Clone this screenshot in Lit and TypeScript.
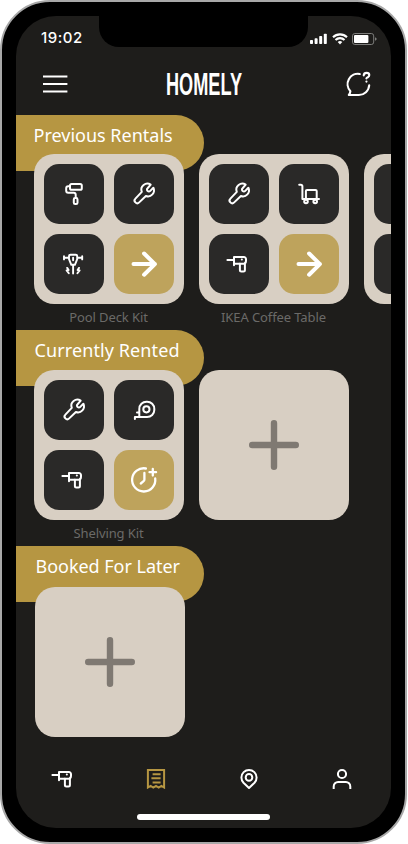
import { LitElement, html, svg, css } from "lit";
import { customElement, property } from "lit/decorators.js";

const icons: Record<string, { size: number; stroke: number; body: unknown }> = {
  roller: {
    size: 24,
    stroke: 2,
    body: svg`<rect x="8" y="1.9" width="11.8" height="5.9" rx="1.6"/><path d="M8 4.2H6.2a2 2 0 0 0-2 2v2.6a2 2 0 0 0 2 2h5.5a2 2 0 0 1 2 2v3"/><rect x="11.8" y="16" width="3.7" height="6.1" rx="1.4"/>`,
  },
  wrench: {
    size: 24,
    stroke: 2,
    body: svg`<path d="M18.7 2.7a6 6 0 0 0-8.9 7.2L3.4 16.6a2.6 2.6 0 0 0 3.8 3.8l6.7-6.4a6 6 0 0 0 7.5-8.2l-3.4 3.3a1.5 1.5 0 0 1-2.2 0l-.4-.4a1.5 1.5 0 0 1 0-2.2z"/>`,
  },
  jackhammer: {
    size: 24,
    stroke: 1.9,
    body: svg`<path d="M2 4.2v3.2M20.2 4.2v3.2M2 5.8h5M15.2 5.8h5M7 4.2q0-1.4 1.4-1.4h5.4q1.4 0 1.4 1.4v3l-2.3 5.6H9.3L7 7.2zM11.1 5.8v2.4M11.1 13v8.6M5.2 15.9l1.4 2.1-2 .4 2.2 2.9M17 15.9l-1.4 2.1 2 .4-2.2 2.9"/>`,
  },
  arrow: {
    size: 30,
    stroke: 4,
    body: svg`<path d="M4.5 15.1h21.4M15.1 4.5l10.8 10.6-10.8 10.6"/>`,
  },
  trolley: {
    size: 24,
    stroke: 2,
    body: svg`<path d="M2.2 2.8h1.6a1.6 1.6 0 0 1 1.6 1.6v12.6h16.6"/><rect x="8.9" y="7.9" width="10.8" height="9.1" rx="1.2"/><circle cx="9" cy="19.5" r="1.8"/><circle cx="18.2" cy="19.5" r="1.8"/>`,
  },
  drill: {
    size: 24,
    stroke: 2,
    body: svg`<path d="M.4 8.1h6M7 5v8.3M7 5h9.8a2.2 2.2 0 0 1 2.2 2.2v1.4q0 1.4-1.1 2.4v7a1.5 1.5 0 0 1-1.5 1.5h-2a1.5 1.5 0 0 1-1.5-1.5v-6.4M7 11.7h9.4q2.6 0 2.6-3M14.8 7.4h.1"/>`,
  },
  tape: {
    size: 24,
    stroke: 2,
    body: svg`<path d="M2.9 21v-1.9h12.2a7.2 7.2 0 0 0 7.2-7.2v-1a7.2 7.2 0 0 0-7.2-7.2h-.6a7.2 7.2 0 0 0-7.2 7.2v8.2M5 14.4h2.3"/><circle cx="14.4" cy="11.3" r="3.1"/>`,
  },
  clock: {
    size: 30,
    stroke: 2.3,
    body: svg`<path d="M16.9 3.5A11.6 11.6 0 1 0 26.2 13.4M15.4 8v6.6q0 1-.8 1.6l-2.8 2.3M23.8 3.9v6.6M20.5 7.2h6.6"/>`,
  },
  chat: {
    size: 26,
    stroke: 2.1,
    body: svg`<path d="M13.8 3A10.3 10.3 0 0 0 4.4 20.2Q4.2 22.4 2.8 24H12.7A10.4 10.4 0 0 0 23.2 14.2M17.7 4.4q.2-2.5 2.9-2.5 2.6 0 2.7 2.2 0 1.3-1.5 2.1-1.3.6-1.4 1.2M20.4 10.6h.1"/>`,
  },
  receipt: {
    size: 24,
    stroke: 2,
    body: svg`<path stroke-linejoin="miter" stroke-linecap="butt" d="M3.9 20.6V3h16.2v17.6l-2.7-1.6-2.7 1.6L12 19l-2.7 1.6L6.6 19zM8.6 7.2h8M7.4 11.3h9.2M8.6 15.4h8"/>`,
  },
  pin: {
    size: 24,
    stroke: 2,
    body: svg`<path d="M12 21l-5.5-5.2a7.6 7.6 0 1 1 11 0z"/><circle cx="12" cy="10.4" r="3.3"/>`,
  },
  user: {
    size: 24,
    stroke: 2,
    body: svg`<circle cx="12" cy="7" r="4.1"/><path stroke-linecap="butt" d="M3.7 22v-2.6a4.4 4.4 0 0 1 4.4-4.4h7.8a4.4 4.4 0 0 1 4.4 4.4V22"/>`,
  },
  menu: {
    size: 26,
    stroke: 2,
    body: svg`<path stroke-linecap="butt" d="M1 5.5h24.4M1 13h24.4M1 20.4h24.4"/>`,
  },
  plus: {
    size: 52,
    stroke: 6.4,
    body: svg`<path d="M26 4.2v43.6M4.2 26h43.6"/>`,
  },
};

@customElement("line-icon")
class LineIcon extends LitElement {
  @property() name = "";
  static styles = css`
    :host { display: block; flex: none; }
    svg {
      display: block;
      overflow: visible;
      fill: none;
      stroke: currentColor;
      stroke-linecap: round;
      stroke-linejoin: round;
    }
  `;
  render() {
    const i = icons[this.name];
    return i
      ? html`<svg width=${i.size} height=${i.size} viewBox="0 0 ${i.size} ${i.size}" stroke-width=${i.stroke}>${i.body}</svg>`
      : null;
  }
}

@customElement("kit-card")
class KitCard extends LitElement {
  @property({ attribute: false }) tools: string[] = [];
  @property() label = "";
  static styles = css`
    :host { display: block; flex: none; width: 150px; }
    .card {
      box-sizing: border-box;
      height: 150px;
      padding: 10px;
      border-radius: 20px;
      background: #d8cfc3;
      display: grid;
      grid-template-columns: 60px 60px;
      grid-template-rows: 60px 60px;
      gap: 10px;
    }
    .empty { display: flex; align-items: center; justify-content: center; color: #7f7972; }
    .tile {
      display: flex;
      align-items: center;
      justify-content: center;
      border-radius: 15px;
      background: #2a2928;
      color: #fff;
    }
    .action { background: #bea35c; }
    .label {
      height: 26px;
      line-height: 27px;
      font-size: 13px;
      letter-spacing: -0.1px;
      padding-right: 1px;
      text-align: center;
      color: #6b6a68;
      white-space: nowrap;
    }
  `;
  render() {
    if (!this.tools.length)
      return html`<div class="card empty"><line-icon name="plus"></line-icon></div>`;
    return html`
      <div class="card">
        ${this.tools.map(
          (t, i) => html`<div class="tile ${i === 3 ? "action" : ""}"><line-icon name=${t}></line-icon></div>`
        )}
      </div>
      <div class="label">${this.label}</div>
    `;
  }
}

const sections = [
  {
    key: "previous",
    title: "Previous Rentals",
    kits: [
      { label: "Pool Deck Kit", tools: ["roller", "wrench", "jackhammer", "arrow"] },
      { label: "IKEA Coffee Table", tools: ["wrench", "trolley", "drill", "arrow"] },
      { label: "", tools: ["", "", "", ""] },
    ],
  },
  {
    key: "current",
    title: "Currently Rented",
    kits: [
      { label: "Shelving Kit", tools: ["wrench", "tape", "drill", "clock"] },
      { label: "", tools: [] },
    ],
  },
  { key: "booked", title: "Booked For Later", kits: [{ label: "", tools: [] }] },
];

@customElement("app-root")
class AppRoot extends LitElement {
  static styles = css`
    :host {
      display: block;
      height: 844px;
      background: #fff;
      font-family: "Noto Sans", sans-serif;
      color: #fff;
    }
    .phone {
      box-sizing: border-box;
      width: 407px;
      height: 844px;
      padding: 14px;
      border: 2px solid #a8a8a8;
      border-radius: 50px;
      background: #000;
    }
    .screen {
      display: flex;
      flex-direction: column;
      width: 375px;
      height: 812px;
      border-radius: 40px;
      background: #1e1d1b;
      overflow: hidden;
    }
    .status { display: flex; height: 31px; flex: none; justify-content: space-between; }
    .time {
      width: 83px;
      box-sizing: border-box;
      padding-left: 25px;
      font: 500 15px/43px Inter, sans-serif;
      letter-spacing: 0.5px;
    }
    .notch { width: 209px; height: 31px; background: #000; border-radius: 0 0 20px 20px; }
    .signals { width: 83px; }
    .signals svg { display: block; }
    .bar {
      display: flex;
      align-items: center;
      justify-content: space-between;
      flex: none;
      height: 68px;
      box-sizing: border-box;
      padding: 6px 19px 0 26px;
    }
    .logo { display: block; margin-right: 5px; overflow: visible; }
    .logo text { font: 700 32px "Liberation Sans Narrow", "Liberation Sans", sans-serif; fill: #fff; }
    .section { display: flex; flex-direction: column; flex: none; }
    .tab {
      box-sizing: border-box;
      width: 188px;
      height: 56px;
      padding-left: 17.5px;
      border-radius: 0 28px 28px 0;
      background: #b69642;
      font-size: 18px;
      line-height: 41px;
      white-space: nowrap;
    }
    .kits { display: flex; gap: 15px; margin: -17px 0 0 18px; }
    .current .tab { padding-left: 18.5px; letter-spacing: 0.1px; }
    .current .kits { margin-top: -16px; }
    .booked .tab { padding-left: 19.5px; letter-spacing: -0.03px; }
    .booked .kits { margin: -15px 0 0 19px; }
    .nav {
      display: grid;
      grid-template-columns: repeat(4, 1fr);
      justify-items: center;
      flex: none;
      height: 64px;
      margin-top: auto;
      padding-right: 2px;
    }
    .item { padding-top: 3px; }
    .item:first-child { padding-left: 2px; }
    .selected { color: #b69642; }
    .home { flex: none; width: 133px; height: 6px; margin: -14px 0 8px 121px; border-radius: 3px; background: #fff; }
  `;
  render() {
    return html`
      <div class="phone">
        <div class="screen">
          <div class="status">
            <div class="time">19:02</div>
            <div class="notch"></div>
            <div class="signals">
              <svg width="83" height="31" viewBox="308 16 83 31" fill="#fff">
                <rect x="310" y="40" width="3" height="4" rx="0.8" />
                <rect x="314.6" y="38.3" width="3" height="5.7" rx="0.8" />
                <rect x="319.2" y="36" width="3" height="8" rx="0.8" />
                <rect x="323.8" y="33.7" width="3" height="10.3" rx="0.8" />
                <g fill="none" stroke="#fff" stroke-width="2.1">
                  <path d="M333 37.2a10 10 0 0 1 14 0" />
                  <path d="M335.5 40a6.4 6.4 0 0 1 9 0" />
                </g>
                <path d="M337.7 42.1a3.4 3.4 0 0 1 4.6 0L340 44.4z" />
                <rect x="352.5" y="33.5" width="21.2" height="11" rx="2.4" fill="none" stroke="#7d7d7b" />
                <rect x="354" y="35" width="14.4" height="8" rx="1" />
                <path d="M375 37.2q1.7.6 1.7 1.8t-1.7 1.8z" fill="#7d7d7b" />
              </svg>
            </div>
          </div>
          <div class="bar">
            <line-icon name="menu"></line-icon>
            <svg class="logo" width="80" height="32" viewBox="0 0 80 32">
              <text x="1" y="26.8" textLength="76" lengthAdjust="spacingAndGlyphs">HOMELY</text>
            </svg>
            <line-icon name="chat"></line-icon>
          </div>
          ${sections.map(
            (s) => html`
              <div class="section ${s.key}">
                <div class="tab">${s.title}</div>
                <div class="kits">
                  ${s.kits.map((k) => html`<kit-card .tools=${k.tools} .label=${k.label}></kit-card>`)}
                </div>
              </div>
            `
          )}
          <div class="nav">
            ${["drill", "receipt", "pin", "user"].map(
              (n) => html`<div class="item ${n === "receipt" ? "selected" : ""}"><line-icon name=${n}></line-icon></div>`
            )}
          </div>
          <div class="home"></div>
        </div>
      </div>
    `;
  }
}
